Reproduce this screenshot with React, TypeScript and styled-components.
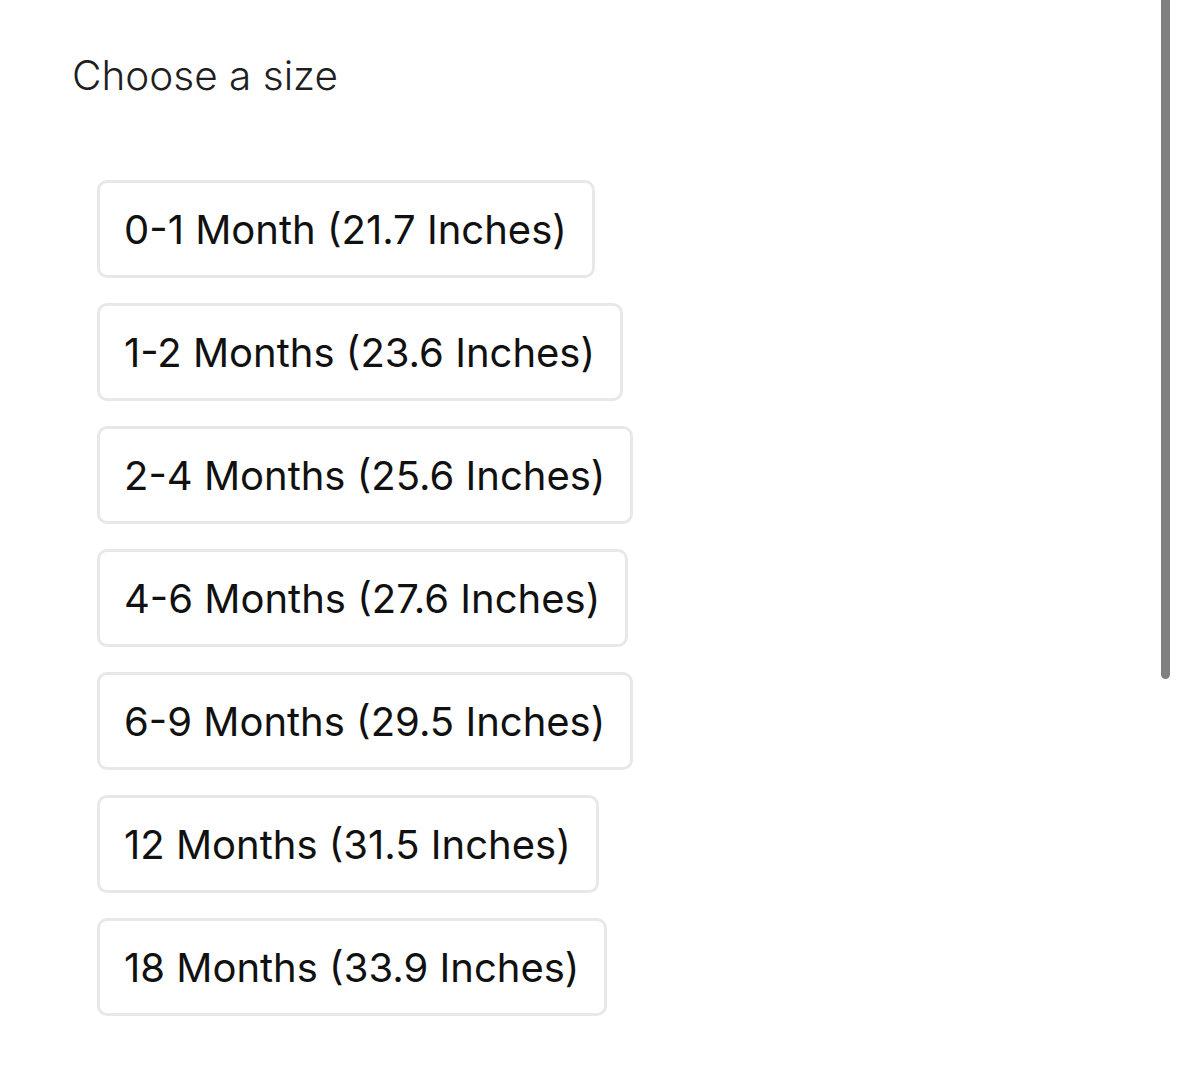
import React from "react";
import styled, { createGlobalStyle } from "styled-components";

const GlobalStyle = createGlobalStyle`
  html, body {
    margin: 0;
    padding: 0;
    background: #ffffff;
  }
  body {
    font-family: Inter, "Noto Sans", "Liberation Sans", sans-serif;
    color: #111111;
  }
`;

const Page = styled.div`
  position: relative;
  width: 1179px;
  height: 1067px;
  overflow: hidden;
  background: #ffffff;
`;

const Title = styled.h2`
  margin: 0;
  padding: 50px 0 0 72px;
  font-size: 40.5px;
  font-weight: 300;
  line-height: 52px;
  color: #1f1f1f;
`;

const SizeList = styled.div`
  display: flex;
  flex-direction: column;
  align-items: flex-start;
  gap: 25px;
  padding: 78px 0 0 97px;
`;

const SizeButton = styled.button`
  box-sizing: border-box;
  height: 98px;
  padding: 0 25px 0 24px;
  border: 3px solid #e8e8e8;
  border-radius: 10px;
  background: #ffffff;
  font-family: inherit;
  font-size: 40px;
  font-weight: 400;
  color: #111111;
  cursor: pointer;
`;

const ScrollThumb = styled.div`
  position: absolute;
  top: 0;
  left: 1161px;
  width: 9px;
  height: 679px;
  background: #808080;
  border-radius: 0 0 5px 5px;
`;

const sizes = [
  "0-1 Month (21.7 Inches)",
  "1-2 Months (23.6 Inches)",
  "2-4 Months (25.6 Inches)",
  "4-6 Months (27.6 Inches)",
  "6-9 Months (29.5 Inches)",
  "12 Months (31.5 Inches)",
  "18 Months (33.9 Inches)",
];

const App = () => {
  return (
    <Page>
      <GlobalStyle />
      <Title>Choose a size</Title>
      <SizeList>
        {sizes.map((size) => (
          <SizeButton key={size}>{size}</SizeButton>
        ))}
      </SizeList>
      <ScrollThumb />
    </Page>
  );
};

export default App;
